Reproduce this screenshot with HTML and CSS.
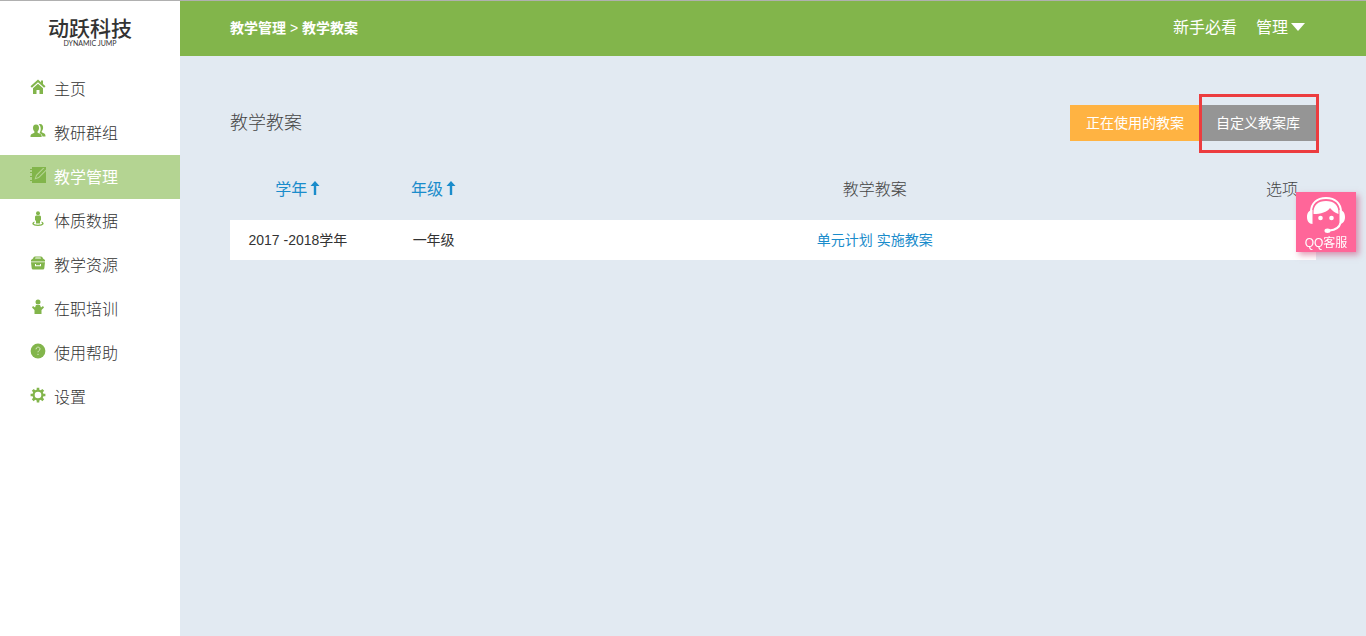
FILE: index.html
```html
<!DOCTYPE html>
<html lang="zh-CN">
<head>
<meta charset="utf-8">
<meta name="viewport" content="width=device-width, initial-scale=1">
<title>教学教案</title>
<link rel="stylesheet" href="styles.css">
</head>
<body>
<div class="app">
  <aside class="sidebar">
    <a class="logo" href="#"><span class="logo-name">动跃科技</span><span class="logo-sub">DYNAMIC JUMP</span></a>
    <nav class="nav">
      <a class="nav-item" href="#"><svg class="icon" viewBox="0 0 16 16"><path d="M8 0.500L0.500 7.300l1.400 1.500L8 3.300l6.100 5.500 1.400-1.500-2.500-2.300V1.500h-2v1.700z"/><path d="M8 4.700L3 9.200V15h3.500v-4h3v4H13V9.200z"/></svg>主页</a>
      <a class="nav-item" href="#"><svg class="icon" viewBox="0 0 16 16"><path d="M10 1c2.300 0 3.300 1.700 3.100 4-.1 1.600-.8 2.500-1.400 3.200v1.100l2.600 1.200c1 .5 1.200 1.500 1.200 3h-3c-.2-1.700-1-2.500-3-3.300 1.600-2.600 2-6.500-.8-8.900z"/><path d="M6 1.500c2.200 0 3.100 1.700 3 3.700-.1 1.500-.7 2.500-1.400 3.200v1.300l2.900 1.300c1 .5 1.200 1.400 1.200 3H.500c0-1.600.2-2.500 1.200-3l2.700-1.300V8.400C3.700 7.700 3.100 6.700 3 5.200c-.1-2 .8-3.700 3-3.700z"/></svg>教研群组</a>
      <a class="nav-item active" href="#" aria-current="page"><svg class="icon" viewBox="0 0 16 16"><path d="M2 0h14v2.500L8.500 10l-2.500 1 1-2.500L14.500 1H2zM2 0h12L6 8l-1.500 4.500L9 11l7-7v12H2v-2H0v-1h2v-3H0V9h2V6H0V5h2V3H0V2h2z"/></svg>教学管理</a>
      <a class="nav-item" href="#"><svg class="icon" viewBox="0 0 16 16"><circle cx="8" cy="2.200" r="2"/><path d="M6 4.500h4l1 1v4h-1v3H6v-3H5v-4z"/><path d="M4.500 10.500C1 11.500 1.500 15 8 15s7-3.500 3.500-4.500v1.300c1.600 1 .2 1.900-3.500 1.900s-5.100-.9-3.500-1.900z"/></svg>体质数据</a>
      <a class="nav-item" href="#"><svg class="icon" viewBox="0 0 16 16"><path fill-rule="evenodd" d="M3 3.500Q3.500 1.500 5 1.500h6q1.500 0 2 2L15 5v1.500H1V5zM5 3.500h6l-.5-1h-5z"/><path d="M1 7.300h14l-.7 6q-.2 1.200-1.300 1.200H3q-1.100 0-1.300-1.200zM5 9v2.200h6V9h-1v1.200H6V9z" fill-rule="evenodd"/></svg>教学资源</a>
      <a class="nav-item" href="#"><svg class="icon" viewBox="0 0 16 16"><circle cx="8" cy="3" r="2.500"/><path d="M6 6h4l1 2.500L13 7l1 1.500-2.500 2.500V15h-7v-4L2 8.500 3 7l2 1.500z"/></svg>在职培训</a>
      <a class="nav-item" href="#"><svg class="icon" viewBox="0 0 16 16"><circle cx="8" cy="8" r="7.400"/><path class="icon-line" d="M6 6.300c0-2.800 4-2.700 4-.3C10 7.500 8 7.500 8 9.300M8 10.800V12"/></svg>使用帮助</a>
      <a class="nav-item" href="#"><svg class="icon" viewBox="0 0 16 16"><path fill-rule="evenodd" d="M6.700.700h2.600v2l1.500.600 1.500-1.400 1.900 1.900-1.400 1.500.6 1.400h2v2.600h-2l-.6 1.500 1.400 1.500-1.900 1.900-1.500-1.400-1.500.600v2H6.700v-2l-1.500-.6-1.500 1.400-1.900-1.900 1.400-1.500-.6-1.500h-2V6.700h2l.6-1.400-1.400-1.500 1.900-1.900 1.500 1.400 1.500-.6zM8 4.700a3.300 3.300 0 1 0 0 6.600 3.300 3.300 0 0 0 0-6.600z"/></svg>设置</a>
    </nav>
  </aside>
  <div class="main">
    <header class="topbar">
      <div class="crumbs"><a href="#">教学管理</a> <span>&gt;</span> <a href="#">教学教案</a></div>
      <div class="top-links">
        <a href="#">新手必看</a>
        <button class="manage" type="button">管理<svg class="caret" viewBox="0 0 14 8"><path d="M0 0h14L7 8z"/></svg></button>
      </div>
    </header>
    <main class="content">
      <div class="heading">
        <h1>教学教案</h1>
        <div class="actions">
          <button class="btn btn-current" type="button">正在使用的教案</button>
          <div class="highlight"><button class="btn btn-custom" type="button">自定义教案库</button></div>
        </div>
      </div>
      <table class="plans">
        <thead>
          <tr>
            <th class="col-narrow"><a href="#">学年<svg class="sort" viewBox="0 0 10 14"><path d="M5 0l4.500 5H6.200v9H3.800V5H.500z"/></svg></a></th>
            <th class="col-narrow"><a href="#">年级<svg class="sort" viewBox="0 0 10 14"><path d="M5 0l4.500 5H6.200v9H3.800V5H.500z"/></svg></a></th>
            <th>教学教案</th>
            <th class="col-option">选项</th>
          </tr>
        </thead>
        <tbody>
          <tr><td>2017 -2018学年</td><td>一年级</td><td><a href="#">单元计划</a> <a href="#">实施教案</a></td><td></td></tr>
        </tbody>
      </table>
    </main>
  </div>
</div>
<a class="service" href="#">
  <svg class="service-icon" viewBox="0 0 40 38">
    <path class="band" d="M5 16C5 7 11 2 20 2s15 5 15 14"/>
    <path d="M7.500 18C7 9 12 5 20 5s13 4 12.500 13c-3.500-1-6-3-8.500-6-3 4-9 6-16.500 6z"/>
    <path d="M6.500 14v14C3 28 1 25 1 21s2-7 5.500-7zM33.500 14v14c3.500 0 5.500-3 5.500-7s-2-7-5.500-7z"/>
    <circle cx="14.500" cy="22" r="2.300"/><circle cx="25.500" cy="22" r="2.300"/>
    <path class="mic" d="M34.500 27c-1 4-5 7-11 7.500"/><ellipse cx="21.500" cy="34.800" rx="3" ry="2.200"/>
  </svg>
  <span>QQ客服</span>
</a>
</body>
</html>
```
FILE: styles.css
```css
* { box-sizing: border-box; }
body {
  margin: 0;
  background: #e2eaf2;
  color: #333;
  font: 14px/20px "Liberation Sans", "Noto Sans CJK SC", sans-serif;
}
a { color: #1a8ccb; text-decoration: none; }
button { border: 0; font: inherit; cursor: pointer; }
.app { display: flex; min-height: 100vh; border-top: 1px solid #b0b0b0; }
.sidebar { flex: 0 0 180px; background: #fff; }
.logo {
  display: flex;
  flex-direction: column;
  align-items: center;
  height: 66px;
  padding-top: 18px;
  color: #333;
}
.logo-name { font-size: 21px; line-height: 20px; font-weight: 500; }
.logo-sub { font-family: Lato, sans-serif; font-size: 7px; line-height: 8px; font-weight: 400; }
.nav-item {
  display: flex;
  align-items: center;
  gap: 8px;
  height: 44px;
  padding: 0 0 3px 30px;
  color: #333;
  font-size: 16px;
  font-weight: 300;
  font-family: "Noto Sans CJK SC", sans-serif;
}
.nav-item.active { background: #b4d492; color: #fff; font-weight: 400; }
.icon { width: 16px; height: 16px; margin-bottom: 1px; fill: #82b54b; }
.icon-line { fill: none; stroke: #d9eac7; stroke-width: 1; }
.main { flex: 1; min-width: 0; }
.topbar {
  display: flex;
  align-items: center;
  justify-content: space-between;
  height: 55px;
  padding: 0 61px 1px 50px;
  background: #82b54b;
  color: #fff;
}
.topbar a { color: #fff; }
.crumbs { font-size: 14px; }
.crumbs a { font-weight: 700; }
.top-links { display: flex; gap: 19px; font-size: 16px; }
.manage { display: flex; align-items: center; gap: 3px; padding: 0; background: none; color: #fff; }
.caret { width: 14px; height: 8px; margin-bottom: 3px; fill: #fff; }
.content { padding: 49px 50px; }
.heading { display: flex; align-items: center; justify-content: space-between; margin-bottom: 28px; }
h1 { margin: 0; color: #444; font-size: 18px; line-height: 36px; font-weight: 300; }
.actions { display: flex; }
.btn { display: block; height: 36px; padding: 0 16px; color: #fff; }
.btn-current { background: #ffb342; }
.btn-custom { background: #959595; }
.highlight { position: relative; }
.highlight::after {
  content: "";
  position: absolute;
  inset: -11px -3px -12px -1px;
  border: 3px solid #ec3c3f;
  pointer-events: none;
}
.plans { width: 100%; table-layout: fixed; border-collapse: collapse; text-align: center; }
.plans th { height: 51px; padding: 0 0 10px; color: #444; font-size: 16px; font-weight: 300; }
.plans th a { font-weight: 400; }
.plans td { height: 40px; padding: 0; background: #fff; }
.col-narrow { width: 12.5%; }
.col-option { width: 6.25%; }
.sort { width: 10px; height: 14px; margin-left: 3px; fill: #1a8ccb; }
.service {
  position: fixed;
  top: 192px;
  right: 10px;
  display: flex;
  flex-direction: column;
  align-items: center;
  width: 60px;
  height: 60px;
  padding-top: 4px;
  background: #ff6699;
  box-shadow: 3px 3px 6px rgba(200, 60, 110, 0.5);
  color: #fff;
  font-size: 12px;
  line-height: 18px;
}
.service-icon { width: 40px; height: 38px; fill: #fff; }
.band, .mic { fill: none; stroke: #fff; stroke-width: 2; }
```
